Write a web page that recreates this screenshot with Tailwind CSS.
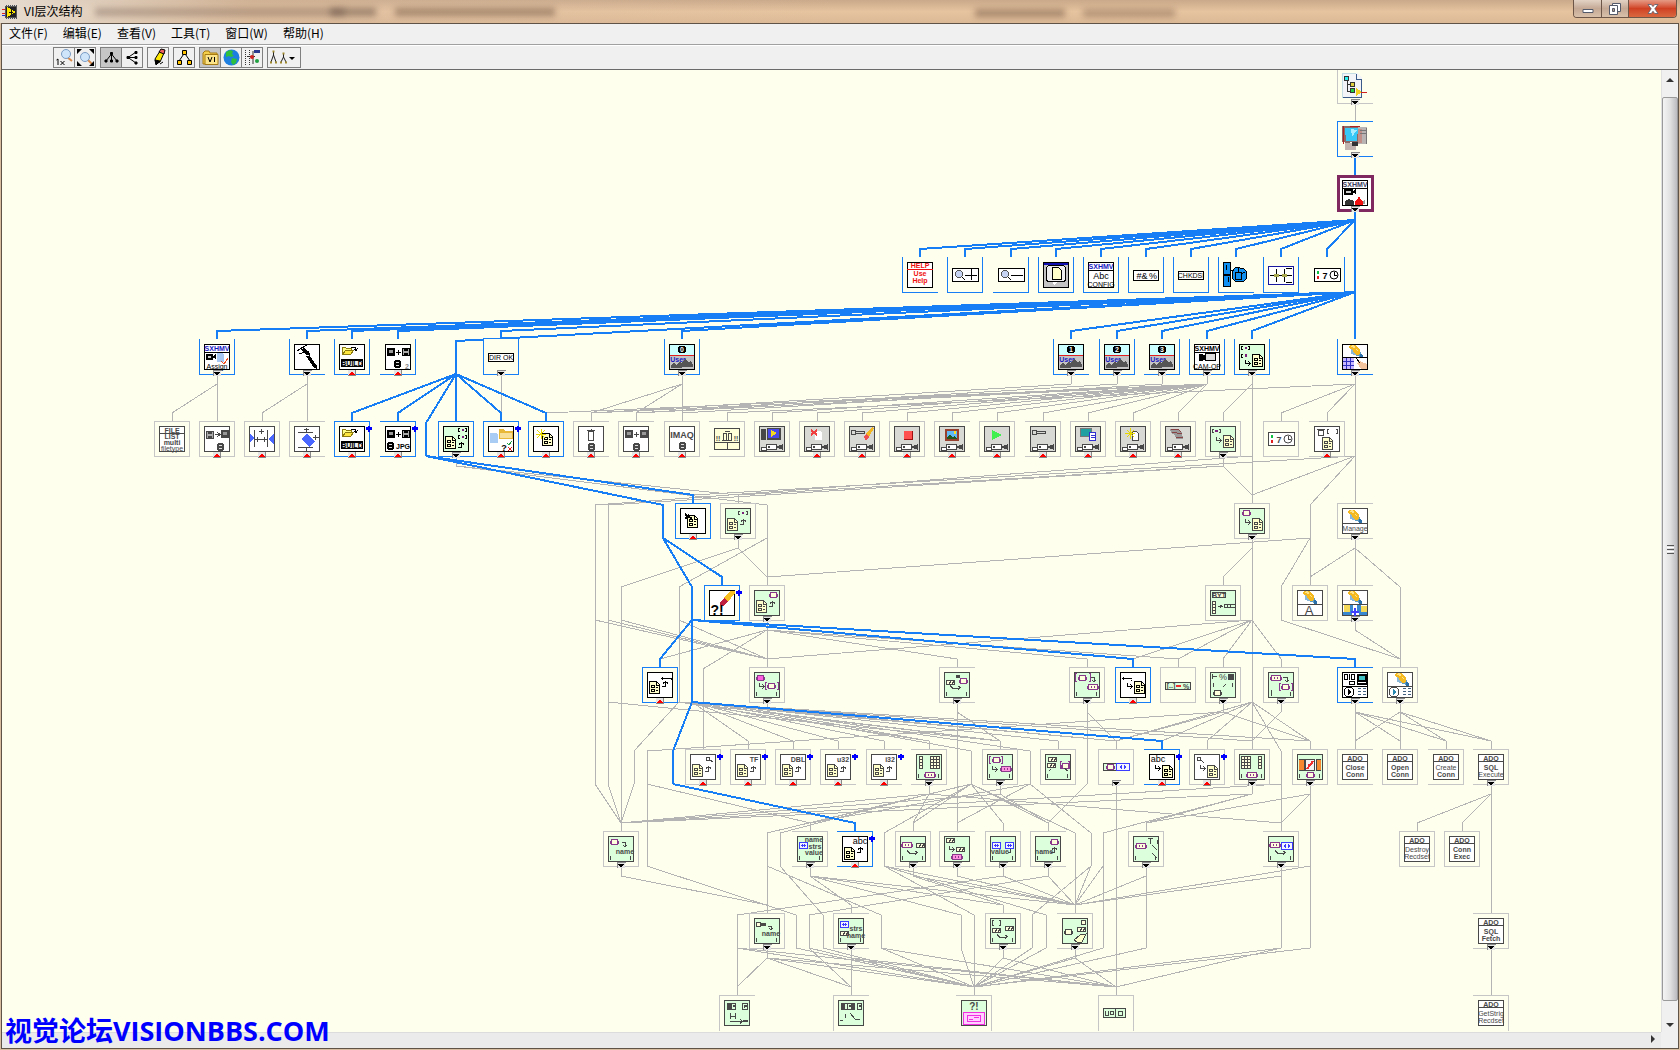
<!DOCTYPE html>
<html lang="zh-CN">
<head>
  <meta charset="UTF-8">
  <meta name="viewport" content="width=device-width, initial-scale=1.0">
  <title>VI层次结构</title>
  <script src="https://cdn.jsdelivr.net/npm/@tailwindcss/browser@4"></script>
</head>
<body class="h-screen overflow-hidden bg-[#d9bd9f] font-['Noto_Sans_CJK_SC',sans-serif] text-xs text-black">
  <div class="flex h-full flex-col">
    <!-- Title bar -->
    <header class="relative flex h-[23px] shrink-0 items-center overflow-hidden bg-linear-to-b from-[#c9a98a] via-[#e6c4a0] to-[#dcb996] pl-[2px]">
      <div class="absolute inset-0 bg-linear-to-r from-[#e6dcd0] via-[#d9bda4]/40 via-15% to-transparent to-50%"></div>
      <div class="absolute top-[8px] left-[95px] h-2 w-[250px] bg-[#6b5548]/40 blur-[3px]"></div>
      <div class="absolute top-[8px] left-[330px] h-2 w-[46px] bg-[#5b483c]/50 blur-[3px]"></div>
      <div class="absolute top-[8px] left-[395px] h-2 w-[160px] bg-[#6b4f3c]/50 blur-[3px]"></div>
      <div class="absolute top-[9px] left-[975px] h-2 w-[90px] bg-[#6b4f3c]/50 blur-[3px]"></div>
      <div class="absolute top-[9px] left-[1083px] h-2 w-[92px] bg-[#6b4f3c]/40 blur-[3px]"></div>
      <svg class="relative size-4" viewBox="0 0 16 16" shape-rendering="crispEdges">
        <path d="M0 5h3M0 9h3" stroke="#e02020"/>
        <path d="M0 11h3" stroke="#2030d0"/>
        <path d="M3 1h12v14H3z" fill="#555"/>
        <path d="M3 1.500h12M3 14.500h12" stroke="#ddd" stroke-dasharray="1 1"/>
        <path d="M4 3h10v10H4z" fill="#222"/>
        <path d="M5 3v10l9-5z" fill="#ffe800"/>
        <path d="M7 8h4M9 6v4" stroke="#111"/>
      </svg>
      <h1 class="relative ml-[6px] pb-px leading-5">VI层次结构</h1>
      <div class="absolute top-0 right-[3px] flex h-[18px] overflow-hidden rounded-b-[4px] border border-t-0 border-[#6d5547]">
        <button aria-label="最小化" class="flex w-7 items-center justify-center border-r border-[#6d5547] bg-linear-to-b from-[#e3d3c5] via-[#c4a995] to-[#d8c0aa]">
          <svg class="h-3 w-3" viewBox="0 0 12 12"><path d="M1 6.500h10v3H1z" fill="#fff" stroke="#555a6b"/></svg>
        </button>
        <button aria-label="还原" class="flex w-[27px] items-center justify-center border-r border-[#6d5547] bg-linear-to-b from-[#e3d3c5] via-[#c4a995] to-[#d8c0aa]">
          <svg class="h-3 w-3" viewBox="0 0 12 12" fill="#fff" stroke="#555a6b"><path d="M3.500.500h8v8h-8z"/><path d="M.500 2.500h8v9h-8z"/><path d="M3.500 5.500h2v3h-2z" fill="#b79b86"/></svg>
        </button>
        <button aria-label="关闭" class="flex w-[47px] items-center justify-center bg-linear-to-b from-[#e59a85] via-[#cf4023] to-[#d9683f]">
          <svg class="h-3 w-3" viewBox="0 0 12 12"><path d="M1 1.500h3.300L6 3.600l1.700-2.100H11L7.800 5.800 11 10.500H7.700L6 8.200l-1.700 2.300H1l3.200-4.700z" fill="#fff" stroke="#555a6b" stroke-width=".8"/></svg>
        </button>
      </div>
    </header>

    <div class="mx-px flex min-h-0 flex-1 flex-col border border-[#5f5247]">
      <!-- Menu bar -->
      <nav class="flex h-[21px] shrink-0 items-center gap-[15px] border-b border-[#a0a0a0] bg-[#f0f0f0] pb-[3px] pl-[7px] leading-4">
        <a href="#">文件(F)</a>
        <a href="#">编辑(E)</a>
        <a href="#">查看(V)</a>
        <a href="#">工具(T)</a>
        <a href="#">窗口(W)</a>
        <a href="#">帮助(H)</a>
      </nav>

      <!-- Toolbar -->
      <div class="flex h-[25px] shrink-0 items-center gap-1 border-t border-b border-t-white border-b-[#6a6a6a] bg-[#f0f0f0] pl-[51px]">
        <div class="flex h-[21px] divide-x divide-[#808080] border border-[#808080]">
          <button aria-label="实际大小" class="w-[21px]">
            <svg class="mx-auto size-[19px]" viewBox="0 0 19 19"><path d="M12 9l5 4" stroke="#d98a4a" stroke-width="2"/><circle cx="11" cy="6" r="4.500" fill="#cfe6fa" stroke="#7b9cc4"/><path d="M1.500 12l1.500-1V17M5.500 13l4 4M9.500 13l-4 4" fill="none" stroke="#000"/></svg>
          </button>
          <button aria-label="适合窗口" class="w-5">
            <svg class="mx-auto size-[19px]" viewBox="0 0 19 19"><path d="M12 12l4 4" stroke="#d98a4a" stroke-width="2"/><circle cx="9" cy="9" r="4.500" fill="#cfe6fa" stroke="#7b9cc4"/><path d="M1 1h5L1 6zM18 1v5l-5-5zM1 18v-5l5 5zM18 18h-5l5-5z"/></svg>
          </button>
        </div>
        <div class="flex h-[21px] divide-x divide-[#808080] border border-[#808080]">
          <button aria-label="垂直布局" class="w-[21px] bg-[#c6c6c6]">
            <svg class="mx-auto size-[19px]" viewBox="0 0 19 19" stroke="#000"><path d="M9.500 5v9M9.500 6L4 13M9.500 6L15 13" fill="none"/><path d="M8.500 4.500h2v2h-2zM3 12h2v2H3zM8.500 12h2v2h-2zM14 12h2v2h-2z"/></svg>
          </button>
          <button aria-label="水平布局" class="w-5">
            <svg class="mx-auto size-[19px]" viewBox="0 0 19 19" stroke="#000"><path d="M5 9.500h9M5 9.500L13 4M5 9.500L13 15" fill="none"/><path d="M4 8.500h2v2H4zM12 3.500h2v2h-2zM12 8.500h2v2h-2zM12 14h2v2h-2z"/></svg>
          </button>
        </div>
        <button aria-label="重做布局" class="h-[21px] w-[22px] border border-[#808080]">
          <svg class="mx-auto size-[19px]" viewBox="0 0 19 19" stroke="#000"><path d="M6 11l5-8 4 2-4 9-4 2z" fill="#ffe800"/><path d="M10 4l2-3 4 1-1 4z" fill="#f06060"/><path d="M6 12l5 1-4 4z"/><path d="M11 16l3-2" fill="none"/></svg>
        </button>
        <button aria-label="包含全部层次" class="h-[21px] w-[22px] border border-[#808080]">
          <svg class="mx-auto size-[19px]" viewBox="0 0 19 19" stroke="#000"><path d="M9.500 5L4 13M9.500 5L15 13"/><path d="M7.500 2.500h4v4h-4zM2.500 12.500h4v4h-4zM12.500 12.500h4v4h-4z" fill="#ffc400"/></svg>
        </button>
        <div class="flex h-[21px] divide-x divide-[#808080] border border-[#808080]">
          <button aria-label="包含VI库" class="w-[21px] bg-[#c6c6c6]">
            <svg class="mx-auto size-[19px]" viewBox="0 0 19 19"><path d="M2 5l2-2h4l1 2h7v11H2z" fill="#f4cf4c" stroke="#a87b12"/><path d="M4 6.500h13v10H4z" fill="#fbe48a" stroke="#a87b12"/><path d="M7 9l2 5 2-5M13.500 9v5" fill="none" stroke="#000"/></svg>
          </button>
          <button aria-label="包含全局变量" class="w-[21px]">
            <svg class="mx-auto size-[19px]" viewBox="0 0 19 19"><circle cx="9.500" cy="9.500" r="8" fill="#1f7fe0"/><path d="M4 4l4-2 3 1-1 3 2 2-3 1-2-1-3 1zM10 10l5 1-1 4-3 2-2-3z" fill="#2fbf3f"/></svg>
          </button>
          <button aria-label="包含自定义类型" class="w-5">
            <svg class="mx-auto size-[19px]" viewBox="0 0 19 19"><path d="M2.500 2v16M6.500 2v16" stroke="#333" stroke-dasharray="1 1"/><path d="M4 8.500h8M10 3v13" stroke="#333"/><path d="M11 2h6v3h-6z" fill="#2a3a90"/><circle cx="9" cy="9" r="2" fill="#d02020"/><circle cx="14" cy="13" r="2" fill="#20a040"/></svg>
          </button>
        </div>
        <button aria-label="查找" class="h-[21px] w-[34px] border border-[#808080]">
          <svg class="mx-auto h-[19px] w-8" viewBox="0 0 32 19" fill="none" stroke="#222"><path d="M5.500 4v3L3 14M5.500 7L8 14M15.500 6v3L13 14M15.500 9L18 14"/><path d="M4.500 3.500h2M2 14.500h2M7 14.500h2M14.500 5.500h2M12 14.500h2M17 14.500h2" stroke="#a08a30" stroke-width="2"/><path d="M21 9h6l-3 3z" fill="#000" stroke="none"/></svg>
        </button>
      </div>

      <div class="grid min-h-0 flex-1 grid-cols-[1fr_17px] grid-rows-[1fr_16px]">
        <!-- Hierarchy canvas -->
        <main class="min-h-0 overflow-hidden bg-[#ffffee]">
          <svg id="canvas" class="block h-full w-full font-['Liberation_Sans',sans-serif]"></svg>
        </main>

        <!-- Vertical scrollbar -->
        <div class="flex flex-col border-l border-[#e0e0e0] bg-[#f0f0f0]">
          <button aria-label="向上滚动" class="flex h-[27px] items-center justify-center pb-2">
            <svg class="h-1 w-2" viewBox="0 0 8 4"><path d="M0 4l4-4 4 4z" fill="#333"/></svg>
          </button>
          <div class="flex flex-1 flex-col items-center justify-center gap-px rounded-[2px] border border-[#9a9a9a] bg-linear-to-r from-[#f4f4f4] via-[#e2e2e2] to-[#bcbcc0]">
            <span class="h-px w-[7px] bg-[#555]"></span>
            <span class="h-px w-[7px] bg-white"></span>
            <span class="h-px w-[7px] bg-[#555]"></span>
            <span class="h-px w-[7px] bg-white"></span>
            <span class="h-px w-[7px] bg-[#555]"></span>
          </div>
          <button aria-label="向下滚动" class="flex h-[31px] items-center justify-center pt-4">
            <svg class="h-1 w-2" viewBox="0 0 8 4"><path d="M0 0h8L4 4z" fill="#333"/></svg>
          </button>
        </div>

        <!-- Horizontal scrollbar -->
        <div class="flex items-center justify-end border-t border-[#dcdcdc] bg-[#ebebeb] pr-[6px] pb-1">
          <button aria-label="向右滚动">
            <svg class="h-2 w-1" viewBox="0 0 4 8"><path d="M0 0l4 4-4 4z" fill="#333"/></svg>
          </button>
        </div>
        <div class="bg-[#f0f0f0]"></div>
      </div>
    </div>
    <div class="h-px shrink-0"></div>
  </div>

  <p class="absolute bottom-[3px] left-[5px] font-['Open_Sans','Noto_Sans_CJK_SC',sans-serif] text-[27px] leading-8 font-bold text-[#0000ff]">视觉论坛VISIONBBS.COM</p>

  <script>
    const BLUE = '#187ef5';
    const GRAY = '#b4b4b4';
    const TOP = [68, 121, 175, 257, 339, 421, 503, 585, 667, 749, 831, 913, 995];
    const SIZE = 36;

    // ---- icon parts, drawn in a 26 x 26 box ----
    const box = (bg, inner) => `<path d="M.5.5h25v25H.5z" fill="${bg}" stroke="currentColor"/>${inner}`;
    const line = (d, c = 'currentColor') => `<path d="${d}" fill="none" stroke="${c}"/>`;
    const fill = (d, c = 'currentColor') => `<path d="${d}" fill="${c}"/>`;
    const txt = (s, y, x = 13, c = 'currentColor') => `<text x="${x}" y="${y}" fill="${c}" text-anchor="middle" class="${s.length < 6 ? 'text-[7px] font-bold' : 'text-[7px]'}">${s}</text>`;
    const big = (s, y, x = 13, c = 'currentColor') => `<text x="${x}" y="${y}" fill="${c}" text-anchor="middle" class="text-[9px]">${s}</text>`;
    const at = (x, y, s) => `<g transform="translate(${x},${y})">${s}</g>`;
    const doc = (x, y) => at(x, y, `<path d="M.5.5h7l3 3v9H.5z" fill="#ffffcc" stroke="currentColor"/>` + line('M7.5 1v3h3M2.5 4.500h3v2h-3zM2.500 8.500h3v2h-3zM7 6.500h2M7 9.500h2'));
    const tag = (x, y, c = '#8a3a8a', bg = '#ffffdd') => at(x, y, `<path d="M1.500.5h6v5h-6z" fill="${bg}" stroke="${c}"/>` + line('M.5 1.500v3M8.500 1.500v3', c));
    const wide = (x, y, c = '#8a3a8a', bg = '#ffffdd') => at(x, y, `<path d="M1.500.5h9v5h-9z" fill="${bg}" stroke="${c}"/>` + line('M.5 1.500v3M11.500 1.500v3M4.500 2v2M7.500 2v2', c));
    const cell = (x, y) => at(x, y, `<path d="M.5.5h8v4h-8z" fill="#ffffdd" stroke="currentColor"/>` + line('M3 4l2-3M6 4l2-3'));
    const str = (x, y) => at(x, y, `<path d="M.5.5h8v6h-8z" fill="#f4f4ff" stroke="#3c3cff"/>` + line('M3.500 2v3M5.500 2v3', '#3c3cff') + line('M2 3.500h5', '#3c3cff'));
    const grid = (x, y, n) => at(x, y, `<path d="M.5.5h${n * 3}v12H.5z" fill="#ffffdd" stroke="currentColor"/>` + line(`M0 3.500h${n * 3}M0 6.500h${n * 3}M0 9.500h${n * 3}` + (n > 1 ? 'M3.500 0v12M6.500 0v12' : '')));
    const upArrow = (x, y) => at(x, y, line('M0 5.500h3.500V1M1 2.500l2.500-2 2.500 2'));
    const inArrow = (x, y) => at(x, y, line('M.5 0v3.500H5M3 1l2.500 2.500L3 6'));
    const swoop = (x, y) => at(x, y, line('M0 .5l3 3h5l2-1M8 1l2.500 1.500L8 5'));
    const ticks = line('M2.500 20v4') + line('M22.500 20v4');
    const disk = (x, y) => at(x, y, `<path d="M.5.5h7v7h-7z" fill="#aaa" stroke="currentColor"/>` + fill('M2 1h4v2H2zM2 5h4v3H2z'));
    const photo = (x, y) => at(x, y, fill('M0 0h8v8H0z') + fill('M2 2h4v3H2z', '#999'));
    const db = (x, y) => at(x, y, fill('M0 1h1V0h5v1h1v6H6v1H1V7H0z') + fill('M2 2h3v1H2zM2 5h3v1H2z', '#ddd'));
    const camera = (x, y) => at(x, y, `<path d="M5.500 1.500h10v5h-10zM.5 4.500h5v3h-5z" fill="#fff" stroke="currentColor"/>` + fill('M16 3l6-2v6l-6-2zM7 3h2v2H7z'));
    const cubes = (x, y) => at(x, y, fill('M2 5l5 2 1 5-6-2z', '#8ab8d8') + fill('M7 7l5 1v5l-5-1z', '#5c9cc4') + fill('M0 2l2-1h4l3 2 2 3v4l-3 1-3-2-1-3-3-1z', '#f4b820') + fill('M1 2l3-1 3 2-2 1zM6 5l3 1-1 1z', '#ffe48a') + fill('M11 10l3 1v3h-3z', '#2b6fa8'));
    const key = (x, y) => at(x, y, line('M.5.5h4v4h-4zM5 1.500h8v2H5'));
    const magnifier = (x, y) => at(x, y, line('M6 6l4 4') + `<circle cx="4" cy="4" r="3.500" fill="#c8d4f4" stroke="#555"/>`);
    const strip = inner => `<path d="M.5 6.500h26v13H.5z" fill="#fff" stroke="currentColor"/>${inner}`;
    const folder = (x, y) => at(x, y, `<path d="M.5 8.500v-7h3l1 1h5v2" fill="#ffff88" stroke="#8a7a10"/><path d="M.5 8.500l3-4h8l-3 4z" fill="#ffe840" stroke="#8a7a10"/>` + line('M9 1.500h4l1 3M12 3l2 1.500L15.500 2'));
    const chip = inner => box('#d8d8d4', camera(2, 17) + inner);
    const green = inner => box('#dcffdc', inner);
    const ado = (a, b) => box('#fff', line('M0 7.500h26') + txt('ADO', 7) + txt(a, 16) + txt(b, 23));
    const user = n => box('#ccffff', fill('M1 12h24v13H1z', '#c4c4c4') + line('M1 11.500h24', '#e02020') + fill('M10 2h6v1h1v5h-1v1h-6V8H9V3h1z') + txt(n, 8, 13, '#fff') + txt('User', 18, 9, '#1818c0') + fill('M2 24v-3l3-2 3 2 2-3 3 1 3-4 3 3 3-1 2 4v2z', '#555'));
    const field = (y) => `<path d="M2.500 ${y}.5h21v7h-21z" fill="#eee" stroke="currentColor"/>` + line(`M3 ${y + 1}.5h20`) + txt('BUILD', y + 7);
    const calc = line('M16 16.500h3M21 16.500h3M16 19.500h3M21 19.500h3M16 22.500h3M21 22.500h3', '#406080');

    const ICONS = {
      project: fill('M0 0h15l5 5v19H0z', '#f2f4f8') + line('M.5 25V.5H14', '#c4dce4') + line('M14.500 1v5h5V24.500H1', '#3a5a8a') + line('M5.500 8v10h5M6 11.500h4', '#333') + `<path d="M2.500 3.500h4v4h-4z" fill="#2ff0f0" stroke="#333"/><path d="M8.500 9.500h4v4h-4z" fill="#e0d040" stroke="#333"/><path d="M8.500 15.500h4v4h-4z" fill="#20d040" stroke="#333"/>` + fill('M14 15l6 4-6 4z', '#f4d020') + line('M19 19.500h6', '#d02020'),
      computer: fill('M0 0h16v16H8v7H3v-7H0z', '#8a6a68') + fill('M16 1h9v17h-9z', '#b8b4b4') + fill('M16 3h4v14h-4z', '#c09088') + line('M18 4.500h7M18 7.500h7M24.500 2v16', '#777') + fill('M3 2h13l-1 13H4z', '#38c8f8') + fill('M9 3l6 1-5 7z', '#a8ecff') + fill('M3 17h11v7H3z', '#c4b4b0') + fill('M10 16h6v4h-6z', '#333') + line('M1.500 0v18M8 .5h10', '#b02020'),
      root: box('#fff', txt('SXHMV', 7, 13, '#3c3c60') + line('M0 8.500h26') + fill('M2 9h9v6H2zM11 11l3-2v5l-3-1z') + fill('M4 11h5v2H4z', '#ccc') + fill('M3 25v-4l4-2 5 2v4z', '#333') + fill('M13 25v-4l2-1 2-4 2 4 2 1v4z', '#f01010') + fill('M21 21l2-1v4h-2z', '#999')),
      help: box('#fff', txt('HELP', 6, 13, '#f01010') + line('M0 7.500h26', '#f01010') + txt('Use', 14, 13, '#f01010') + txt('Help', 21, 13, '#f01010')),
      zoomIn: strip(magnifier(3, 8) + line('M13 13h12M19.500 7v11')),
      zoomOut: strip(magnifier(3, 8) + line('M13 13h12')),
      page: box('#c4c4c4', fill('M1 1h24v2H1z', '#1010b0') + `<rect x="3.500" y="3.500" width="19" height="16" rx="3" fill="#eee" stroke="currentColor"/><path d="M9.500 5.500h6l3 3v9h-9z" fill="#ffffcc" stroke="currentColor"/>` + fill('M10 20h4l-3 4z', '#fff')),
      config: box('#fff', txt('SXHMV', 7, 13, '#1818c0') + line('M0 8.500h26') + big('Abc', 17) + txt('CONFIG', 25)),
      hex: `<path d="M.5 8.500h25v10H.5z" fill="#fff" stroke="currentColor"/>` + big('#&amp;', 17, 9) + big('%', 17, 20),
      check: `<path d="M.5 9.500h25v8H.5z" fill="#fff" stroke="currentColor"/>` + txt('CHKDSI', 16),
      cluster: `<path d="M.5.5h7v12h-7zM.5 13.500h7v11h-7z" fill="#1090f0" stroke="#000"/><path d="M9.500 8.500l3-3 8 1 3 3v7l-3 3h-8l-3-3z" fill="#1090f0" stroke="#000"/>` + line('M12 10.500h6v7h-6zM15 5v5M18 12l4-2M3.500 3v5M5.500 15v5M8 8h3', '#000'),
      align: `<path d="M.5 4.500h25v18H.5z" fill="#fff" stroke="#1818a0"/>` + line('M2 13.500h22M8.500 7v13M16.500 7v13M18 6.500h6M18 20.500h6') + fill('M6 12h5v3H6zM14 12h5v3h-5z', '#a8a850'),
      timer: strip(fill('M3 9h2v3H3z', '#10c040') + fill('M3 14h2v3H3z', '#e02020') + `<text x="11" y="17" text-anchor="middle" fill="currentColor" class="text-[9px] font-bold">7</text><circle cx="20" cy="13" r="4" fill="#fff" stroke="currentColor" shape-rendering="auto"/>` + line('M20 10v3.500h3')),
      assign: box('#fff', txt('SXHMV', 7, 13, '#1818c0') + line('M0 8.500h26') + fill('M2 10h7v6H2zM9 12l3-2v5l-3-1z') + fill('M4 12h3v2H4z', '#ccc') + fill('M13 9h5l2 2v7h-7z', '#a8c8f4') + line('M17 17l3 3 4-6', '#f05020') + txt('Assign', 25)),
      caliper: box('#fff', line('M3 7l6-4 7 9M5 10l8-3M9 3l4-2M12 9l3-2') + fill('M7 5l4 5 4 2 1-2-5-6zM12 12l3-1 8 11v3l-3-1z')),
      build: box('#fff', folder(3, 2) + field(15)),
      save2: box('#fff', photo(2, 4) + line('M11 8.500h5M13.500 6v5') + disk(17, 4) + db(9, 16) + txt('2', 25, 22, '#888')),
      saveJpg: box('#fff', photo(2, 4) + line('M11 8.500h5M13.500 6v5') + disk(17, 4) + db(2, 16) + txt('JPG', 23, 18)),
      dirOk: `<path d="M.5 9.500h25v8H.5z" fill="#fff" stroke="currentColor"/>` + txt('DIR OK', 16),
      user0: user('0'), user1: user('1'), user2: user('2'), user3: user('3'),
      camOp: box('#fff', txt('SXHMV', 7) + line('M0 8.500h26') + fill('M5 10h4v7H5zM9 11h3v5H9z') + `<path d="M11.500 9.500h10v7h-10z" fill="#ddd" stroke="currentColor"/>` + txt('CAM-OP', 25)),
      docOut: green(line('M4 2.500H2.500v3H4M9 2.500h1.500v3H9M4 10.500H2.500v3H4') + fill('M6 3h2v2H6zM6 10h2v3H6z', '#7a207a') + inArrow(6, 16) + doc(13, 10)),
      cubesGrid: box('#fff', cubes(7, 0) + line('M0 13.500h26') + fill('M1 14h11v11H1z', '#c8b8ff') + line('M1 17.500h11M1 21.500h11M4.500 14v11M8.500 14v11', '#3030c0') + fill('M15 19l3-2 7 3v5h-6z', '#f4c49c') + line('M14 14l4 5')),
      fileList: box('#fff', txt('FILE', 7) + line('M0 7.500h26') + txt('LIST', 13) + txt('multi', 19) + txt('filetype', 25)),
      loadImg: box('#fff', disk(2, 5) + line('M11 8.500h5M13 6l3 2.500-3 2.500') + photo(17, 4) + db(13, 17)),
      hArrows: box('#fff', line('M5.500 4v17M18.500 4v17M6 13.500h12M8 11v5M15 11v5M10 5.500h5M12.500 3v5') + fill('M1 8l5 4-5 4zM25 7v12l-6-6z', '#4a68ff')),
      rotate: box('#fff', line('M4 6.500h15M4 21.500h15M12 2v4M9.500 3.500h5M12 22v3M19 11.500h6M21.500 9v5') + fill('M13 7l8 9-6 5-8-8z', '#4a68ff')),
      docUp: green(doc(2, 10) + upArrow(15, 16) + line('M17 2.500h-1.500v3H17M22 2.500h1.500v3H22M17 9.500h-1.500v3H17M22 9.500h1.500v3H22') + fill('M19 3h2v2h-2zM19 10h2v2h-2z', '#7a207a')),
      fileCheck: box('#fff', fill('M2 7h6l2 2v8H2z', '#a8ccf4') + fill('M11 3h5l1 2h8v8H11z', '#e8b838') + fill('M12 7h12v5H12z', '#f8e098') + `<text x="16" y="25" text-anchor="middle" fill="currentColor" class="text-[9px] font-bold">?</text>` + line('M19 17l2 2 3-4', '#20a040') + line('M20 21l4 4M24 21l-4 4', '#e02020')),
      newDoc: box('#fff', doc(9, 7) + line('M8 3v10M3 8h10M4 4l8 8M12 4l-8 8', '#e8d800')),
      trash: box('#fff', line('M10.500 5.500h5v9h-5zM9 4.500h8M13 3v2') + db(10, 17)),
      copyImg: box('#fff', photo(2, 4) + line('M11 8.500h5M13.500 6v5') + photo(17, 4) + db(10, 17)),
      imaq: box('#fff', `<text x="13" y="12" text-anchor="middle" fill="currentColor" class="text-[9px] font-bold">IMAQ</text>` + db(10, 16)),
      panel: `<path d="M.5 2.500h25v21H.5z" fill="#ffffd8" stroke="currentColor"/>` + line('M0 16.500h26M13.500 16v7M9.500 14V7h3v7M14.500 14V7h3v7M11 5.500h5M8 14.500h10') + txt('!!', 15, 4) + txt('!!', 15, 22),
      camScreen: chip(fill('M2 3h5v11H2z') + fill('M8 2h14v12H8z') + fill('M9 3h11v9H9z', '#4848e8') + fill('M12 4l6 3-6 4z', '#f4d820')),
      camDelete: chip(fill('M11 5h5l2 2v7h-7z', '#fff') + `<path d="M7 4l6 5M13 4l-6 5" stroke="#f04040" stroke-width="2"/>`),
      camClear: chip(key(2, 4) + fill('M17 8l6-7 2 1-5 9z', '#f4b820') + fill('M15 11l2-3 3 3-3 4z', '#f05050')),
      camStop: chip(fill('M10 5h8v8h-8z', '#ff5050') + line('M10 13.500h8.500V5', '#a01010')),
      camPic: chip(fill('M6 3h14v12H6z', '#984030') + fill('M8 5h10v8H8z', '#60b8f4') + fill('M8 13v-2l3-2 3 2 2-1 2 3z', '#205820') + fill('M15 5h2v3h-2z', '#ffe020')),
      camPlay: chip(fill('M8 4l10 5-10 5z', '#40f050')),
      camKey: chip(key(2, 4)),
      camCopy: chip(`<path d="M5.500 2.500h11v8h-11z" fill="#20a0a0" stroke="#777"/><path d="M14.500 6.500h6v8h-6z" fill="#fff" stroke="#3030d0"/>` + line('M16 9.500h4M16 11.500h4', '#3030d0')),
      camNew: chip(`<path d="M12.500 5.500h4l2 2v7h-6z" fill="#fff" stroke="currentColor"/>` + line('M10.500 2v11M5 7.500h10M7 4l7 7M14 4l-7 7', '#e8d800')),
      camMany: chip(fill('M5 3h8l4 3 1 7h-7l-1-4-4-2z', '#9a9a9a') + line('M6 3h7l3 3M7 6l10 2M11 11h7', '#844')),
      docIn: green(line('M4 3.500H2.500v3H4M9 3.500h1.500v3H9') + fill('M5 4h3v2H5z', '#7a207a') + inArrow(6, 11) + doc(13, 9)),
      docTrash: box('#fff', line('M4.500 4.500h5v5h-5zM3 3.500h8M15 3.500h-1.500v4H15M22 3.500h1.500v4H22') + doc(8, 11)),
      docErase: box('#fff', doc(7, 7) + `<path d="M5 6l7 5M5 11l4-4" stroke="currentColor" stroke-width="2"/>`),
      docArr: green(doc(2, 10) + upArrow(15, 11) + line('M15 3.500h-1.500v3H15M21 3.500h1.500v3H21') + fill('M17 4h2v2h-2z', '#7a207a')),
      docTagIn: green(tag(3, 2) + inArrow(6, 11) + doc(13, 10)),
      docTagUp: green(doc(2, 10) + upArrow(15, 11) + tag(15, 2)),
      manage: box('#fff', cubes(6, 1) + line('M0 15.500h26') + txt('Manage', 23)),
      eraser: box('#fff', fill('M14 8l8-7h4v2l-7 9z', '#f8c020') + fill('M11 12l4-4 4 4-5 4-3-1z', '#c02040') + `<text x="8" y="25" text-anchor="middle" class="text-[14px] font-bold" fill="currentColor">?!</text>`),
      gridStr: green(`<path d="M2.500 2.500h13v5h-13z" fill="#ffffdd" stroke="currentColor"/>` + txt('BYT', 8, 9) + grid(2, 11, 1) + line('M8 16.500h4M10 15l2 1.500-2 1.500M14.500 14.500h11v3h-11zM17.500 14v4M20.500 14v4')),
      cubesA: box('#fff', cubes(6, 0) + line('M0 14.500h26') + `<text x="12" y="25" text-anchor="middle" class="text-[13px]" fill="currentColor">A</text>`),
      cubesPlus: box('#fff', cubes(6, 0) + line('M0 14.500h26') + fill('M6 15h5v8H6zM1 22h9v3H1zM15 15h4v6h-4zM17 20h8v5h-8z', '#3888d0') + fill('M2 15h6v7H2zM19 16h6v6h-6z', '#f4d858') + `<path d="M9 22h8M13 18v8" stroke="#4040ff" stroke-width="2"/>`),
      keyUp: box('#fff', doc(2, 9) + upArrow(15, 9) + line('M14 6.500h11M15.500 5v3M24 5.500v2')),
      keyIn: box('#fff', doc(14, 9) + inArrow(7, 11) + line('M2 6.500h10M3.500 5v3M11 7.500v1')),
      tagWide: green(tag(2, 3, '#8a3a8a', '#ff60e0') + inArrow(5, 11) + line('M13 10.500h-1.500v7H13M23 10.500h1.500v7H23', '#8a3a8a') + tag(13, 11) + ticks),
      tagCell: green(fill('M12 3h4v3h-4z') + cell(2, 8) + tag(15, 6) + swoop(6, 13) + ticks),
      tagPair: green(line('M3 1.500H1.500v8H3M15 1.500h1.500v8H15', '#8a3a8a') + tag(4, 3) + wide(13, 12) + line('M17 5.500h3v4M18 8l2 2 2-2') + ticks),
      numStr: `<path d="M.5 10.500h25v7H.5z" fill="#dcffdc" stroke="currentColor"/>` + txt('[..]', 16, 6) + `<path d="M11 14h5" stroke="#f03030" stroke-width="2"/>` + txt('%', 17, 21),
      percent: green(line('M2.500 2v5M3 4.500h4') + big('%', 8, 13) + fill('M18 2h6v6h-6z') + tag(3, 18, 'currentColor') + line('M13 15l3-3M3.500 11v4M22.500 11v4')),
      tagSwap: green(wide(2, 3) + line('M13 11.500h-1.500v7H13M23 11.500h1.500v7H23', '#8a3a8a') + tag(13, 12) + line('M15 5.500h4v4M17 8l2 2 2-2') + line('M3.500 18v6M22.500 20v4')),
      binary: box('#fff', line('M2.500 2.500h3v5h-3zM7.500 2v6M9.500 2.500h3v5h-3z') + fill('M15 2h10v11H15z') + fill('M17 4h6v4h-6z', '#40c0c0') + fill('M16 10h8v1h-8z', '#fff') + line('M0 14.500h26M7 9.500h5v3H7z') + `<circle cx="7" cy="20" r="5" fill="#fff" stroke="currentColor"/>` + fill('M6 17l3 3-3 3z') + calc),
      cubesPlay: box('#fff', cubes(8, 0) + line('M0 14.500h26') + `<circle cx="7" cy="20" r="5" fill="#fff" stroke="currentColor"/>` + fill('M6 17l3 3-3 3z', '#2888b0') + calc),
      docEnum: box('#fff', doc(2, 10) + upArrow(15, 12) + line('M16.500 3.500h3v3h-3zM20 6l3 2')),
      docTF: box('#fff', doc(2, 10) + upArrow(15, 12) + txt('TF', 8, 19)),
      docDBL: box('#fff', doc(2, 10) + upArrow(15, 12) + txt('DBL', 8, 18)),
      docU32: box('#fff', doc(2, 10) + upArrow(15, 12) + txt('u32', 8, 18)),
      docI32: box('#fff', doc(2, 10) + upArrow(15, 12) + txt('i32', 8, 19)),
      docAbc: box('#fff', doc(2, 11) + upArrow(15, 11) + big('abc', 8, 18)),
      abcDoc: box('#fff', doc(13, 11) + inArrow(6, 11) + big('abc', 8, 9)),
      enumDoc: box('#fff', doc(13, 11) + inArrow(6, 11) + line('M3.500 3.500h3v3h-3zM7 6l3 3')),
      gridTag: green(grid(3, 2, 1) + grid(14, 2, 3) + wide(8, 18) + ticks),
      tagInPink: green(line('M4 2.500H2.500v7H4M14 2.500h1.500v7H14', '#8a3a8a') + tag(5, 3) + inArrow(5, 12) + wide(13, 12, '#8a3a8a', '#ff90e0') + ticks),
      cells: green(cell(3, 3) + cell(2, 9) + line('M17 7.500h-1.500v7H17M23 7.500h1.500v7H23', '#8a3a8a') + tag(16, 9) + line('M4 17l2-2M19 14l4 3') + ticks),
      tagStr: `<path d="M.5 9.500h25v7H.5z" fill="#dcffdc" stroke="currentColor"/>` + tag(3, 10) + `<path d="M13.500 9.500h13v7h-13z" fill="#f4f4ff" stroke="#3c3cff"/>` + fill('M19 11v4l-3-2zM21 11l3 2-3 2z', '#3c3cff'),
      gridTag2: green(grid(2, 2, 3) + grid(19, 2, 1) + wide(7, 18) + ticks),
      orange: green(fill('M2 5h22v11H2z', '#f4f4f4') + fill('M2 6h5v10H2zM19 6h5v10h-5z', '#f88830') + line('M8.500 5.500h9v11h-9zM2 5.500h5v11H2M24 5.500h-5v11h5') + `<path d="M10 15l6-8M11 12l5-4" stroke="#f03030" stroke-width="2"/>` + tag(9, 18) + ticks),
      tagName: green(tag(2, 3) + line('M14 6.500h3v4M15 9l2 2 2-2') + txt('name', 18, 17) + ticks),
      strName: green(str(2, 6) + txt('name', 6, 17) + txt('strs', 13, 18) + txt('value', 19, 17) + ticks),
      tagSwoop: green(wide(1, 6) + cell(16, 7) + swoop(7, 14) + ticks),
      cellPink: green(cell(2, 2) + inArrow(5, 10) + cell(12, 11) + wide(7, 18, '#8a3a8a', '#ff90e0')),
      strValue: green(str(2, 6) + str(15, 6) + txt('value', 18, 10) + line('M18 16.500h2M20.500 13v4') + ticks),
      nameTag: green(tag(15, 3) + txt('name', 18, 9) + upArrow(16, 11) + ticks),
      tagTree: green(wide(2, 7) + line('M15 2.500h5M17.500 3v5M19 9l5 5M24 4v4M19 17l5 5') + ticks),
      tagStr2: green(wide(1, 6) + `<path d="M13.500 6.500h11v7h-11z" fill="#f4f4ff" stroke="#3c3cff"/>` + fill('M18 8v4l-3-2zM20 8l3 2-3 2z', '#3c3cff') + swoop(7, 14) + ticks),
      cellName: green(`<path d="M2.500 4.500h4v4h-4z" fill="#ffffdd" stroke="currentColor"/>` + fill('M6 5h6v3H6z') + line('M14 8.500h3v3M15 10l2 2 2-2') + txt('name', 18, 17) + ticks),
      strStrs: green(str(2, 3) + cell(2, 13) + txt('strs', 13, 18) + txt('name', 20, 18) + ticks),
      bracketCell: green(line('M4 2.500H2.500v5H4M9 2.500h1.500v5H9') + cell(2, 10) + cell(15, 8) + swoop(7, 16) + ticks),
      tagHand: green(tag(2, 11, 'currentColor') + `<path d="M19.500 2.500h4v4h-4z" fill="#ffffdd" stroke="currentColor"/>` + cell(15, 9) + `<path d="M12 22l6-5 6-1-4 8-5 0z" fill="#ffffcc" stroke="currentColor"/>`),
      flagA: green(fill('M3 3h4v7H3z') + line('M7.500 3.500h4v6h-4zM18.500 3.500h5v6h-5zM20 5v3M6.500 13v6M7 16.500h4M11.500 13v6M6 21.500h12M16 19l2 2.500-2 2') + fill('M9 5h2v2H9zM20 5h3v2h-3zM19 20h5v2h-5z')),
      flagB: green(fill('M3 3h3v7H3zM14 3h3v7h-3z') + line('M6.500 3.500h3v6h-3zM9.500 3.500h4v6h-4zM19.500 3.500h4v6h-4zM2 20.500h3M7 14v4M12 13l5 6h5') + fill('M11 5h2v2h-2zM21 5h2v2h-2z')),
      query: green(`<text x="13" y="10" text-anchor="middle" class="text-[10px] font-bold" fill="currentColor">?!</text><path d="M2.500 12.500h21v12h-21z" fill="#ffd0ff" stroke="#f030e0"/>` + line('M6.500 15.500h13v6h-13zM8 19.500h4M13 17.500h5', '#f030e0')),
      pairCell: `<path d="M.5 8.500h22v9H.5z" fill="#dcffdc" stroke="currentColor"/>` + line('M12.500 9v8M2.500 11v4h3v-4M7.500 11.500h3v3h-3zM15.500 15v-4h4v4z'),
      closeConn: ado('Close', 'Conn'), openConn: ado('Open', 'Conn'), createConn: ado('Create', 'Conn'),
      sqlExec: ado('SQL', 'Execute'), destroy: ado('Destroy', 'Recdset'), connExec: ado('Conn', 'Exec'),
      sqlFetch: ado('SQL', 'Fetch'), getString: ado('GetStrig', 'Recdset'),
    };

    // row, centre x, icon, flags
    // b blue, v sub-VIs below, u collapsed, s starred; l r t d = side not drawn
    const NODES = [
      [0, 1355, 'project', 'vr'], [1, 1355, 'computer', 'bvr'], [2, 1355, 'root', 'vm'],
      [3, 920, 'help', 'btr'], [3, 965, 'zoomIn', 'bt'], [3, 1011, 'zoomOut', 'btl'], [3, 1056, 'page', 'bt'], [3, 1101, 'config', 'bt'],
      [3, 1146, 'hex', 'bt'], [3, 1191, 'check', 'bt'], [3, 1236, 'cluster', 'btr'], [3, 1281, 'align', 'bt'], [3, 1327, 'timer', 'btl'],
      [4, 217, 'assign', 'btv'], [4, 307, 'caliper', 'btvr'], [4, 352, 'build', 'btu'], [4, 398, 'save2', 'btul'], [4, 501, 'dirOk', 'btv'], [4, 682, 'user0', 'btv'],
      [4, 1071, 'user1', 'btvr'], [4, 1117, 'user2', 'btv'], [4, 1162, 'user3', 'btvl'], [4, 1207, 'camOp', 'btv'], [4, 1252, 'docOut', 'btv'], [4, 1355, 'cubesGrid', 'btvr'],
      [5, 172, 'fileList', ''], [5, 217, 'loadImg', 'u'], [5, 262, 'hArrows', 'u'], [5, 307, 'rotate', 'ur'], [5, 352, 'build', 'bus'], [5, 398, 'saveJpg', 'busl'],
      [5, 456, 'docUp', 'bv'], [5, 501, 'fileCheck', 'bus'], [5, 546, 'newDoc', 'bu'], [5, 591, 'trash', 'ur'], [5, 636, 'copyImg', 'ur'], [5, 682, 'imaq', 'u'],
      [5, 727, 'panel', 'l'], [5, 772, 'camScreen', ''], [5, 817, 'camDelete', 'u'], [5, 862, 'camClear', 'u'], [5, 907, 'camStop', 'u'], [5, 952, 'camPic', 'ur'],
      [5, 997, 'camPlay', 'u'], [5, 1043, 'camKey', 'ul'], [5, 1088, 'camCopy', 'u'], [5, 1133, 'camNew', 'u'], [5, 1178, 'camMany', 'u'], [5, 1223, 'docIn', 'v'],
      [5, 1281, 'timer', ''], [5, 1327, 'docTrash', 'ul'],
      [6, 693, 'docErase', 'bu'], [6, 738, 'docArr', 'v'], [6, 1252, 'docTagIn', 'v'], [6, 1355, 'manage', 'vr'],
      [7, 722, 'eraser', 'bs'], [7, 767, 'docTagUp', 'v'], [7, 1223, 'gridStr', ''], [7, 1310, 'cubesA', ''], [7, 1355, 'cubesPlus', 'vr'],
      [8, 660, 'keyUp', 'bu'], [8, 767, 'tagWide', 'v'], [8, 957, 'tagCell', 'vr'], [8, 1087, 'tagPair', 'v'], [8, 1133, 'keyIn', 'bu'], [8, 1178, 'numStr', ''],
      [8, 1223, 'percent', 'v'], [8, 1281, 'tagSwap', 'v'], [8, 1355, 'binary', 'bvr'], [8, 1400, 'cubesPlay', 'v'],
      [9, 703, 'docEnum', 'us'], [9, 748, 'docTF', 'us'], [9, 793, 'docDBL', 'us'], [9, 838, 'docU32', 'usr'], [9, 884, 'docI32', 'usr'], [9, 929, 'gridTag', 'vl'],
      [9, 1000, 'tagInPink', 'v'], [9, 1058, 'cells', ''], [9, 1116, 'tagStr', 'v'], [9, 1162, 'abcDoc', 'busl'], [9, 1207, 'enumDoc', 'us'], [9, 1252, 'gridTag2', 'v'],
      [9, 1310, 'orange', 'v'], [9, 1355, 'closeConn', 'r'], [9, 1400, 'openConn', ''], [9, 1446, 'createConn', 'l'], [9, 1491, 'sqlExec', 'vl'],
      [10, 621, 'tagName', 'v'], [10, 810, 'strName', 'vl'], [10, 855, 'docAbc', 'busl'], [10, 913, 'tagSwoop', 'v'], [10, 957, 'cellPink', 'vr'], [10, 1003, 'strValue', 'v'],
      [10, 1048, 'nameTag', 'vr'], [10, 1146, 'tagTree', 'v'], [10, 1281, 'tagStr2', 'vl'], [10, 1417, 'destroy', ''], [10, 1462, 'connExec', ''],
      [11, 767, 'cellName', 'v'], [11, 851, 'strStrs', 'vr'], [11, 1003, 'bracketCell', 'v'], [11, 1075, 'tagHand', 'vl'], [11, 1491, 'sqlFetch', 'vl'],
      [12, 737, 'flagA', 'rd'], [12, 851, 'flagB', 'rd'], [12, 974, 'query', 'ld'], [12, 1116, 'pairCell', 'd'], [12, 1491, 'getString', 'ld'],
    ];

    // row, x, starts at a node (1) or passes by (0), child nodes, pass-through columns
    const BLUE_LINKS = [
      [1, 1355, 1, [1355], []],
      [2, 1355, 1, [920, 965, 1011, 1056, 1101, 1146, 1191, 1236, 1281, 1327], [1355]],
      [3, 1355, 0, [217, 307, 352, 398, 501, 682, 1071, 1117, 1162, 1207, 1252, 1355], [456]],
      [4, 456, 0, [352, 398, 456, 501, 546], [426]],
      [5, 426, 0, [693], [663]],
      [6, 663, 0, [722], [692]],
      [7, 692, 0, [660, 1133, 1355], [692]],
      [8, 692, 0, [1162], [673]],
      [9, 673, 0, [855], []],
    ];
    const GRAY_LINKS = [
      [0, 1355, 1, [1355], []],
      [4, 217, 1, [172, 217], []], [4, 307, 1, [262, 307], []], [4, 501, 1, [501], []], [4, 682, 1, [591, 636, 682], []],
      [4, 1071, 1, [591], []], [4, 1117, 1, [636], []], [4, 1162, 1, [682], []],
      [4, 1207, 1, [546, 591, 636, 772, 817, 862, 907, 952, 997, 1043, 1088, 1133, 1178], []],
      [4, 1252, 1, [1223], [1252]], [4, 1355, 1, [727, 1281, 1327], [1355]],
      [5, 456, 1, [738], [767]], [5, 1223, 1, [738, 1252], [608]], [5, 1252, 0, [1252], [595]], [5, 1355, 0, [693, 1252, 1355], [1310]],
      [6, 595, 0, [], [595]], [6, 608, 0, [], [608]], [6, 738, 1, [767], [621]], [6, 767, 0, [767], [679]],
      [6, 1252, 1, [1223], [1252]], [6, 1310, 0, [767, 1310], [1281]], [6, 1355, 1, [1310, 1355], [1400]],
      [7, 595, 0, [767], [595]], [7, 608, 0, [767], [608]], [7, 621, 0, [767], [621]], [7, 679, 0, [767], [679]],
      [7, 767, 1, [660, 767, 957, 1087, 1178], [703]], [7, 1252, 0, [767, 1133, 1178, 1223, 1281], [1252]],
      [7, 1281, 0, [1400], []], [7, 1355, 1, [1400], []], [7, 1400, 0, [1400], []],
      [8, 595, 0, [], [595]], [8, 608, 0, [1000], [608]], [8, 621, 0, [], [621]], [8, 679, 0, [929, 1000, 1116, 1252, 1310], [634]],
      [8, 692, 0, [748, 793, 838, 884, 1058, 1116], []], [8, 703, 0, [703], [971, 1030]],
      [8, 767, 1, [929, 1000], []], [8, 957, 1, [1000], [957]], [8, 1087, 1, [1116], [1087]],
      [8, 1223, 1, [1116, 1310], [647]], [8, 1252, 0, [1116, 1162, 1207, 1252, 1310], [1281]], [8, 1281, 1, [1252], []],
      [8, 1355, 1, [1355, 1400, 1446, 1491], []], [8, 1400, 1, [1355, 1400, 1446, 1491], []],
      [9, 595, 0, [621], []], [9, 608, 0, [621], []], [9, 621, 0, [621], []], [9, 634, 0, [621], []], [9, 647, 0, [810], [647]],
      [9, 929, 1, [621, 913, 1281], [780]], [9, 957, 0, [957], []], [9, 971, 0, [810, 913, 1003, 1048], [767, 884, 1075]],
      [9, 1000, 1, [621, 1048], []], [9, 1030, 0, [810, 957], [1091]], [9, 1087, 0, [1048], []], [9, 1116, 1, [], [1116]],
      [9, 1252, 1, [621, 1146], [1103]], [9, 1281, 0, [621, 1281], []], [9, 1310, 1, [1146, 1281], [1310]], [9, 1491, 1, [1417, 1462], [1491]],
      [10, 621, 1, [767], []], [10, 647, 0, [], [796]], [10, 767, 0, [767], [881]], [10, 780, 0, [], [823]], [10, 810, 1, [851, 1003, 1075], [961]],
      [10, 884, 0, [1075], [974, 1046]], [10, 913, 1, [1003, 1075], []], [10, 957, 1, [1075], []], [10, 1003, 1, [1075], [737]], [10, 1048, 1, [1075], [809]],
      [10, 1075, 0, [1075], []], [10, 1091, 0, [1075], [1032]], [10, 1103, 0, [1075], [1103]], [10, 1116, 0, [], [1116]],
      [10, 1146, 1, [1075], [1146]], [10, 1281, 1, [1075], [1281]], [10, 1310, 0, [1075], [1310]], [10, 1491, 0, [1491], []],
      [11, 737, 0, [737, 974, 1116], []], [11, 767, 1, [737, 851, 974, 1116], []], [11, 796, 0, [974], []], [11, 809, 0, [851, 974], []],
      [11, 823, 0, [974], []], [11, 851, 1, [851, 974, 1116], []], [11, 881, 0, [974, 1116], []], [11, 961, 0, [974], []], [11, 974, 0, [974], []],
      [11, 1003, 1, [974, 1116], []], [11, 1032, 0, [974], []], [11, 1046, 0, [974], []], [11, 1075, 1, [974, 1116], []], [11, 1103, 0, [974], []],
      [11, 1116, 0, [1116], []], [11, 1146, 0, [974], []], [11, 1281, 0, [974, 1116], []], [11, 1310, 0, [974], []], [11, 1491, 1, [1491], []],
    ];

    function linkPath([row, x, own, nodes, passes]) {
      const bottom = TOP[row] + SIZE - 1;
      const next = TOP[row + 1];
      const from = bottom + (own ? 10 : 0);
      let d = own ? `M${x} ${bottom}V${from}` : '';
      nodes.forEach(n => { d += `M${x} ${from}L${n} ${next - 8}V${next}`; });
      passes.forEach(p => { d += `M${x} ${from}L${p} ${next + 2}V${next + SIZE - 1}`; });
      return d;
    }

    function drawNode([row, x, icon, flags]) {
      const has = f => flags.includes(f);
      const color = has('b') ? BLUE : '#c6c6c6';
      const left = x - 18, top = TOP[row], right = x + 17, bottom = top + SIZE - 1;
      let out = `<path d="M${left} ${top}h36v36h-36z" fill="#ffffee"/>`;
      if (has('m')) {
        out += `<path d="M${left + 1} ${top + 1}h34v34h-34z" fill="#fff" stroke="#802860" stroke-width="3"/>`;
      } else {
        let d = '';
        if (!has('t')) d += `M${left} ${top}.5h36`;
        if (!has('d')) d += `M${left} ${bottom}.5h36`;
        if (!has('l')) d += `M${left}.5 ${top}v36`;
        if (!has('r')) d += `M${right}.5 ${top}v36`;
        out += `<path d="${d}" fill="none" stroke="${color}"/>`;
      }
      const ink = has('b') || has('m') ? '#000' : '#484848';
      out += `<g transform="translate(${x - 13},${top + 5})" color="${ink}">${ICONS[icon]}</g>`;
      if (has('v') || has('u')) {
        out += `<path d="M${x - 4} ${bottom - 4}h8v6h-8z" fill="#e4e4e4"/>`;
        out += has('v')
          ? `<path d="M${x - 4}.5 ${bottom + 2}v-5.500h8" fill="none" stroke="#888"/><path d="M${x - 3} ${bottom - 2}h6l-3 4z" fill="#000"/>`
          : `<path d="M${x - 4} ${bottom + 1}.5h7.500v-6" fill="none" stroke="#888"/><path d="M${x - 3} ${bottom + 1}l3-4 3 4z" fill="#f00"/>`;
      }
      if (has('s')) out += `<path d="M${right - 1} ${top + 5}h2v1h2v3h-2v2h-2v-2h-2v-3h2z" fill="#00f"/>`;
      return out;
    }

    document.getElementById('canvas').innerHTML = `
      <g transform="translate(-2,-70)" shape-rendering="crispEdges">
        <path d="${GRAY_LINKS.map(linkPath).join('')}" fill="none" stroke="${GRAY}"/>
        <path d="${BLUE_LINKS.map(linkPath).join('')}" fill="none" stroke="${BLUE}" stroke-width="2"/>
        ${NODES.map(drawNode).join('')}
      </g>`;
  </script>
</body>
</html>
